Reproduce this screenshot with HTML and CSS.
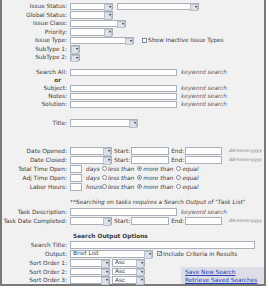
FILE: index.html
```html
<!DOCTYPE html>
<html lang="en">
<head>
    <meta charset="UTF-8">
    <title>Issue Search</title>
    <link rel="stylesheet" href="styles.css">
</head>
<body>
    <form class="panel">
        <!-- issue fields -->
        <div class="row row-a">
            <label class="lbl">Issue Status:</label>
            <span class="sel w43"><select><option></option></select></span>
            <span class="sel w82 ml4"><select><option></option></select></span>
        </div>
        <div class="row row-a">
            <label class="lbl">Global Status:</label>
            <span class="sel w43"><select><option></option></select></span>
        </div>
        <div class="row row-a">
            <label class="lbl">Issue Class:</label>
            <span class="sel w56"><select><option></option></select></span>
        </div>
        <div class="row row-a">
            <label class="lbl">Priority:</label>
            <span class="sel w43"><select><option></option></select></span>
        </div>
        <div class="row row-a">
            <label class="lbl">Issue Type:</label>
            <span class="sel w64"><select><option></option></select></span>
            <input type="checkbox" class="chk ml8"><span class="ml1">Show Inactive Issue Types</span>
        </div>
        <div class="row row-a">
            <label class="lbl">SubType 1:</label>
            <span class="sel w10"><select><option></option></select></span>
        </div>
        <div class="row row-a">
            <label class="lbl">SubType 2:</label>
            <span class="sel w10"><select><option></option></select></span>
        </div>

        <!-- keyword search -->
        <div class="row row-b gap-search">
            <label class="lbl">Search All:</label>
            <input type="text" class="txt w107">
            <span class="hint">keyword search</span>
        </div>
        <div class="row row-b">
            <span class="or">or</span>
        </div>
        <div class="row row-b">
            <label class="lbl">Subject:</label>
            <input type="text" class="txt w107">
            <span class="hint">keyword search</span>
        </div>
        <div class="row row-b">
            <label class="lbl">Notes:</label>
            <input type="text" class="txt w107">
            <span class="hint">keyword search</span>
        </div>
        <div class="row row-b">
            <label class="lbl">Solution:</label>
            <input type="text" class="txt w107">
            <span class="hint">keyword search</span>
        </div>

        <div class="row row-a gap-title">
            <label class="lbl">Title:</label>
            <span class="sel w68"><select><option></option></select></span>
        </div>

        <!-- dates and times -->
        <div class="row row-c gap-dates">
            <label class="lbl">Date Opened:</label>
            <span class="sel w42"><select><option></option></select></span>
            <span class="ml2">Start:</span><input type="text" class="txt w38 ml1">
            <span class="ml2">End:</span><input type="text" class="txt w37 ml1">
            <span class="fmt">dd-mmm-yyyy</span>
        </div>
        <div class="row row-c">
            <label class="lbl">Date Closed:</label>
            <span class="sel w42"><select><option></option></select></span>
            <span class="ml2">Start:</span><input type="text" class="txt w38 ml1">
            <span class="ml2">End:</span><input type="text" class="txt w37 ml1">
            <span class="fmt">dd-mmm-yyyy</span>
        </div>
        <div class="row row-c">
            <label class="lbl">Total Time Open:</label>
            <input type="text" class="txt w12">
            <span class="unit">days</span>
            <input type="radio" name="tto" class="rad"><span class="opt">less than</span>
            <input type="radio" name="tto" class="rad" checked><span class="opt">more than</span>
            <input type="radio" name="tto" class="rad"><span class="opt">equal</span>
        </div>
        <div class="row row-c">
            <label class="lbl">Adj Time Open:</label>
            <input type="text" class="txt w12">
            <span class="unit">days</span>
            <input type="radio" name="ato" class="rad"><span class="opt">less than</span>
            <input type="radio" name="ato" class="rad" checked><span class="opt">more than</span>
            <input type="radio" name="ato" class="rad"><span class="opt">equal</span>
        </div>
        <div class="row row-c">
            <label class="lbl">Labor Hours:</label>
            <input type="text" class="txt w12">
            <span class="unit">hours</span>
            <input type="radio" name="lh" class="rad"><span class="opt">less than</span>
            <input type="radio" name="lh" class="rad" checked><span class="opt">more than</span>
            <input type="radio" name="lh" class="rad"><span class="opt">equal</span>
        </div>

        <!-- tasks -->
        <div class="row row-c gap-note">
            <span class="note">**Searching on tasks requires a Search Output of "Task List"</span>
        </div>
        <div class="row row-c gap-task">
            <label class="lbl">Task Description:</label>
            <input type="text" class="txt w107">
            <span class="hint">keyword search</span>
        </div>
        <div class="row row-c">
            <label class="lbl">Task Date Completed:</label>
            <span class="sel w42"><select><option></option></select></span>
            <span class="ml2">Start:</span><input type="text" class="txt w38 ml1">
            <span class="ml2">End:</span><input type="text" class="txt w37 ml1">
            <span class="fmt">dd-mmm-yyyy</span>
        </div>

        <!-- output options -->
        <div class="row row-c gap-output">
            <span class="heading">Search Output Options</span>
        </div>
        <div class="row row-c">
            <label class="lbl">Search Title:</label>
            <input type="text" class="txt w185">
        </div>
        <div class="row row-c">
            <label class="lbl">Output:</label>
            <span class="sel w83"><select><option>Brief List</option></select></span>
            <input type="checkbox" class="chk ml4" checked><span class="ml1">Include Criteria in Results</span>
        </div>
        <div class="row row-c">
            <label class="lbl">Sort Order 1:</label>
            <span class="sel w40"><select><option></option></select></span>
            <span class="sel w33 ml2"><select><option>Asc</option></select></span>
        </div>
        <div class="row row-a">
            <label class="lbl">Sort Order 2:</label>
            <span class="sel w40"><select><option></option></select></span>
            <span class="sel w33 ml2"><select><option>Asc</option></select></span>
            <div class="saved"><a href="#">Save New Search</a></div>
        </div>
        <div class="row row-a">
            <label class="lbl">Sort Order 3:</label>
            <span class="sel w40"><select><option></option></select></span>
            <span class="sel w33 ml2"><select><option>Asc</option></select></span>
            <div class="saved"><a href="#">Retrieve Saved Searches</a></div>
        </div>
    </form>
</body>
</html>
```

FILE: styles.css
```css
* {
    margin: 0;
    padding: 0;
    box-sizing: border-box;
}

body {
    background-color: #fff;
    color: #3c3c3c;
    font-family: "DejaVu Sans", Verdana, sans-serif;
    font-size: 5.8px;
}

.panel {
    width: 266px;
    height: 286px;
    padding-top: 2px;
    background: #f1f1f1;
    border-left: 2px solid #7a7a7a;
    border-right: 2px solid #7a7a7a;
    border-bottom: 2px solid #7a7a7a;
}

.row {
    display: flex;
    align-items: center;
    white-space: nowrap;
}

.row-a { height: 8.5px; }
.row-b { height: 8px; }
.row-c { height: 9px; }

.gap-search { margin-top: 6.75px; }
.gap-title { margin-top: 10.25px; }
.gap-dates { margin-top: 19.25px; }
.gap-note { margin-top: 6px; }
.gap-task { margin-top: 1px; }
.gap-output { margin-top: 6px; }

.lbl {
    width: 68px;
    flex-shrink: 0;
    padding-right: 3px;
    text-align: right;
}

.or {
    width: 68px;
    padding-right: 9px;
    text-align: right;
    font-weight: bold;
}

/* text boxes */
.txt {
    height: 7.5px;
    background: #fff;
    border: 1px solid #a9b0ba;
    font-size: 5.8px;
    flex-shrink: 0;
}

/* drop downs */
.sel {
    position: relative;
    display: inline-block;
    height: 7.5px;
    flex-shrink: 0;
}

.sel select {
    appearance: none;
    width: 100%;
    height: 100%;
    padding: 0 0 0 2px;
    background: #fff;
    border: 1px solid #a9b0ba;
    border-radius: 0;
    font-family: inherit;
    font-size: 5.8px;
    line-height: 5px;
    color: #3c3c3c;
}

.sel::after {
    content: "";
    position: absolute;
    top: 1px;
    right: 1px;
    width: 6px;
    height: 5.5px;
    background: #dde2ea;
    border: 1px solid #b9c1cd;
}

.sel::before {
    content: "";
    position: absolute;
    top: 3px;
    right: 2.5px;
    z-index: 1;
    border-left: 1.5px solid transparent;
    border-right: 1.5px solid transparent;
    border-top: 2px solid #2d2d2d;
}

.w10 { width: 10px; }
.w12 { width: 12px; }
.w33 { width: 33px; }
.w37 { width: 37px; }
.w38 { width: 38px; }
.w40 { width: 40px; }
.w42 { width: 42px; }
.w43 { width: 43px; }
.w56 { width: 56px; }
.w64 { width: 64px; }
.w68 { width: 68px; }
.w82 { width: 82px; }
.w83 { width: 83px; }
.w107 { width: 107px; }
.w185 { width: 185px; }

.ml1 { margin-left: 1px; }
.ml2 { margin-left: 2px; }
.ml4 { margin-left: 4px; }
.ml8 { margin-left: 8px; }

.hint {
    margin-left: 4px;
    font-style: italic;
    color: #5a5a5a;
}

.fmt {
    margin-left: 7px;
    font-size: 4.5px;
    font-style: italic;
    color: #777;
}

.unit {
    margin-left: 4px;
    width: 13px;
    font-style: italic;
}

.opt {
    margin-left: 1px;
    font-style: italic;
}

/* checkboxes and radios */
.chk {
    appearance: none;
    position: relative;
    width: 5px;
    height: 5px;
    background: #fff;
    border: 1px solid #7f8a98;
    flex-shrink: 0;
}

.chk:checked::after {
    content: "\2713";
    position: absolute;
    top: -2px;
    left: 0;
    font-size: 5px;
    font-weight: bold;
    color: #2a9d2a;
}

.rad {
    appearance: none;
    width: 5px;
    height: 5px;
    margin-left: 3px;
    background: #fff;
    border: 1px solid #7f8a98;
    border-radius: 50%;
    flex-shrink: 0;
}

.rad:checked {
    background: radial-gradient(circle, #2b7a2b 40%, #fff 50%);
}

.note {
    margin-left: 68px;
    font-style: italic;
}

.heading {
    margin-left: 71px;
    font-weight: bold;
}

.saved {
    align-self: stretch;
    display: flex;
    align-items: center;
    width: 83px;
    margin-left: auto;
    padding-left: 4px;
    background: #dcdde7;
}

.saved a {
    color: #2440b8;
    text-decoration: underline;
}
```
